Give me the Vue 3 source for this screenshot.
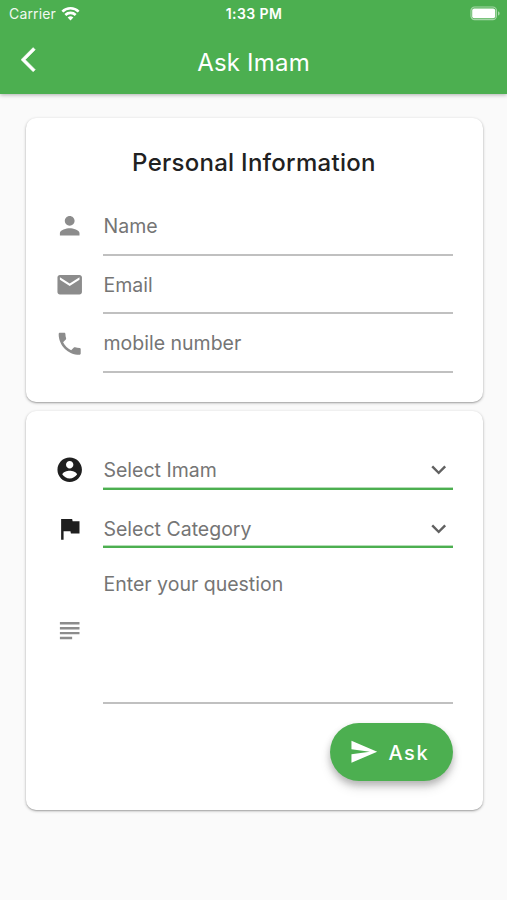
<script setup>
const contactFields = [
  {
    label: 'Name',
    icon: 'M12 12c2.21 0 4-1.79 4-4s-1.79-4-4-4-4 1.79-4 4 1.79 4 4 4zm0 2c-2.67 0-8 1.34-8 4v2h16v-2c0-2.66-5.33-4-8-4z',
  },
  {
    label: 'Email',
    icon: 'M20 4H4c-1.1 0-1.99.9-1.99 2L2 18c0 1.1.9 2 2 2h16c1.1 0 2-.9 2-2V6c0-1.1-.9-2-2-2zm0 4l-8 5-8-5V6l8 5 8-5v2z',
  },
  {
    label: 'mobile number',
    icon: 'M6.62 10.79c1.44 2.83 3.76 5.14 6.59 6.59l2.2-2.2c.27-.27.67-.36 1.02-.24 1.12.37 2.33.57 3.57.57.55 0 1 .45 1 1V20c0 .55-.45 1-1 1-9.39 0-17-7.61-17-17 0-.55.45-1 1-1h3.5c.55 0 1 .45 1 1 0 1.25.2 2.45.57 3.57.11.35.03.74-.25 1.02l-2.2 2.2z',
  },
]

const selects = [
  {
    label: 'Select Imam',
    icon: 'M12 2C6.48 2 2 6.48 2 12s4.48 10 10 10 10-4.48 10-10S17.52 2 12 2zm0 3c1.66 0 3 1.34 3 3s-1.34 3-3 3-3-1.34-3-3 1.34-3 3-3zm0 14.2c-2.5 0-4.71-1.28-6-3.22.03-1.99 4-3.08 6-3.08 1.99 0 5.97 1.09 6 3.08-1.29 1.94-3.5 3.22-6 3.22z',
  },
  {
    label: 'Select Category',
    icon: 'M14.4 6L14 4H5v17h2v-7h5.6l.4 2h7V6z',
  },
]
</script>

<template>
  <div class="screen">
    <header class="top">
      <div class="status">
        <div class="carrier">
          <span class="carrier-text">Carrier</span>
          <svg class="wifi" viewBox="0 0 18 14">
            <path d="M1.3 5.2a11 11 0 0 1 15.4 0" />
            <path d="M4.1 8.4a7 7 0 0 1 9.8 0" />
            <path class="dot" d="M9 13.6L6.3 10.9a3.9 3.9 0 0 1 5.4 0z" />
          </svg>
        </div>
        <span class="clock">1:33 PM</span>
        <div class="power">
          <svg class="battery" viewBox="0 0 31 15">
            <rect class="shell" x="1" y="1" width="25.4" height="12.6" rx="3.6" />
            <rect class="charge" x="2.2" y="2.4" width="23" height="9.8" rx="2" />
            <path class="nub" d="M28 5.2c2.2.8 2.2 3.6 0 4.4z" />
          </svg>
        </div>
      </div>
      <div class="bar">
        <svg class="icon back" viewBox="0 0 24 24">
          <path d="M11.67 3.87L9.9 2.1 0 12l9.9 9.9 1.77-1.77L3.54 12z" />
        </svg>
        <h1 class="page-title">Ask Imam</h1>
      </div>
    </header>

    <main class="content">
      <section class="card personal">
        <h2 class="card-title">Personal Information</h2>
        <div v-for="f in contactFields" :key="f.label" class="row">
          <svg class="icon muted" viewBox="0 0 24 24"><path :d="f.icon" /></svg>
          <div class="field">
            <span class="label">{{ f.label }}</span>
          </div>
        </div>
      </section>

      <section class="card question">
        <div v-for="s in selects" :key="s.label" class="row select-row">
          <svg class="icon dark" viewBox="0 0 24 24"><path :d="s.icon" /></svg>
          <div class="field select">
            <span class="label">{{ s.label }}</span>
            <svg class="icon chevron" viewBox="0 0 24 24">
              <path d="M7.41 8.59L12 13.17l4.59-4.58L18 10l-6 6-6-6z" />
            </svg>
          </div>
        </div>
        <div class="row area-row">
          <svg class="icon muted" viewBox="0 0 24 24">
            <path d="M14 17H4v2h10v-2zm6-8H4v2h16V9zM4 15h16v-2H4v2zM4 5v2h16V5H4z" />
          </svg>
          <div class="field area">
            <span class="label">Enter your question</span>
          </div>
        </div>
        <div class="actions">
          <button class="ask" type="button">
            <svg class="icon" viewBox="0 0 24 24">
              <path d="M2.01 21L23 12 2.01 3 2 10l15 2-15 2z" />
            </svg>
            <span class="ask-text">Ask</span>
          </button>
        </div>
      </section>
    </main>
  </div>
</template>

<style>
body {
  margin: 0;
  background: #fafafa;
}
</style>

<style scoped>
.screen {
  height: 900px;
  overflow: hidden;
  background: #fafafa;
  color: #212121;
  font-family: Inter, "Liberation Sans", sans-serif;
}
.top {
  position: relative;
  height: 93.5px;
  background: #4caf50;
  color: #fff;
  box-shadow: 0 1px 4px rgba(0, 0, 0, 0.3);
}
.status {
  display: grid;
  grid-template-columns: 1fr auto 1fr;
  align-items: center;
  height: 27px;
  padding: 0 6px 0 9px;
}
.carrier {
  display: flex;
  align-items: center;
  gap: 5.5px;
}
.carrier-text {
  font-size: 14px;
  letter-spacing: 0.15px;
  opacity: 0.92;
}
.wifi {
  width: 19px;
  height: 15px;
  margin-top: -1px;
  fill: none;
  stroke: #fff;
  stroke-width: 2.5;
}
.wifi .dot {
  fill: #fff;
  stroke: none;
}
.clock {
  font-size: 14px;
  font-weight: 600;
  letter-spacing: 0.4px;
  padding-right: 2px;
}
.power {
  display: flex;
  justify-content: flex-end;
  margin-top: -1px;
}
.battery {
  width: 31px;
  height: 15px;
}
.shell {
  fill: none;
  stroke: #a5d7a7;
  stroke-width: 1.2;
}
.charge {
  fill: #fff;
}
.nub {
  fill: #a5d7a7;
}
.bar {
  display: grid;
  grid-template-columns: 60px 1fr 60px;
  align-items: center;
  height: 66px;
}
.icon {
  display: block;
  flex: none;
  width: 29.4px;
  height: 29.4px;
  fill: currentColor;
}
.back {
  margin: 0 0 1px 20.6px;
  stroke: currentColor;
  stroke-width: 0.4;
}
.page-title {
  margin: 5px 0 0;
  text-align: center;
  font-size: 24px;
  line-height: 30px;
  font-weight: 400;
  letter-spacing: 0.2px;
}
.content {
  display: flex;
  flex-direction: column;
  gap: 9.5px;
  padding: 24.5px 24.5px 0 25.5px;
}
.card {
  box-sizing: border-box;
  padding: 0 29.5px 0 29.3px;
  border-radius: 10px;
  background: #fff;
  box-shadow: 0 1px 3px rgba(0, 0, 0, 0.3), 0 1px 1px rgba(0, 0, 0, 0.12);
}
.personal {
  height: 283.5px;
}
.question {
  height: 399px;
  padding-top: 20px;
}
.card-title {
  margin: 0;
  height: 79px;
  box-sizing: border-box;
  padding-top: 30px;
  text-align: center;
  font-size: 24px;
  line-height: 30px;
  font-weight: 500;
  letter-spacing: 0.27px;
}
.row {
  display: flex;
  align-items: center;
  gap: 19.3px;
  height: 58.7px;
}
.row > .icon {
  margin-top: -1px;
}
.field {
  flex: 1;
  box-sizing: border-box;
  height: 100%;
  display: flex;
  align-items: center;
  padding-top: 1px;
  border-bottom: 2px solid #c0c0c0;
}
.label {
  font-size: 19.5px;
  line-height: 24px;
  color: #757575;
}
.muted {
  color: #8c8c8c;
}
.dark {
  color: #1f1f1f;
}
.select-row {
  align-items: flex-end;
}
.select-row > .icon {
  margin-bottom: 5px;
}
.select {
  height: 39px;
  padding-top: 2px;
  justify-content: space-between;
  border-bottom: 2px solid #4caf50;
  box-shadow: inset 0 -1px 0 #b5deb7;
}
.chevron {
  color: #616161;
}
.area-row {
  height: 146px;
  margin-top: 9.3px;
}
.area-row > .icon {
  margin-top: 0;
}
.area {
  align-items: flex-start;
  padding-top: 14px;
}
.actions {
  display: flex;
  justify-content: flex-end;
  padding-top: 19px;
}
.ask {
  display: flex;
  align-items: center;
  gap: 10px;
  box-sizing: border-box;
  width: 123.5px;
  height: 58.8px;
  padding: 0 0 0 19.5px;
  border: 0;
  border-radius: 30px;
  background: #4caf50;
  color: #fff;
  font: 500 20px/24px Inter, "Liberation Sans", sans-serif;
  letter-spacing: 1.6px;
  box-shadow: 0 4px 7px rgba(0, 0, 0, 0.22), 0 7px 12px rgba(0, 0, 0, 0.11);
}
.ask-text {
  padding-top: 1px;
}
</style>
